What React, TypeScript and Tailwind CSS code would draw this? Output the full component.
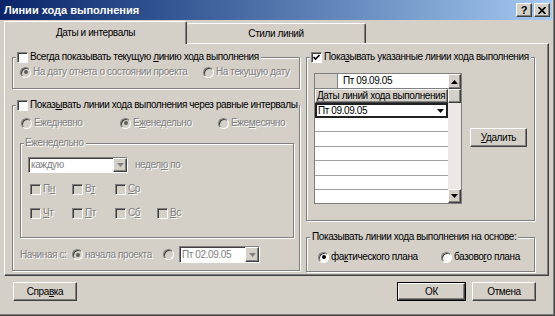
import React from "react";

const raised =
  "border border-t-white border-l-white border-r-[#404040] border-b-[#404040] shadow-[inset_-1px_-1px_0_#808080]";
const sunken =
  "border border-t-[#808080] border-l-[#808080] border-r-white border-b-white shadow-[inset_1px_1px_0_#404040]";
const dis = "text-[#808080] [text-shadow:1px_1px_0_#fff]";

function Check({ checked, disabled }: { checked?: boolean; disabled?: boolean }) {
  return (
    <span
      className={`relative flex h-[11px] w-[11px] shrink-0 items-center justify-center ${sunken} ${
        disabled ? "bg-[#d4d0c8]" : "bg-white"
      }`}
    >
      {checked && (
        <svg width="7" height="7" viewBox="0 0 7 7">
          <path d="M0.5 3 L2.5 5 L6.5 1" fill="none" stroke="#000" strokeWidth="1.6" />
        </svg>
      )}
    </span>
  );
}

function Radio({ checked, disabled }: { checked?: boolean; disabled?: boolean }) {
  return (
    <span
      className={`flex h-[11px] w-[11px] shrink-0 items-center justify-center rounded-full border border-t-[#808080] border-l-[#808080] border-r-white border-b-white shadow-[inset_1px_1px_0_#404040] ${
        disabled ? "bg-[#d4d0c8]" : "bg-white"
      }`}
    >
      {checked && (
        <span className={`h-[4px] w-[4px] rounded-full ${disabled ? "bg-[#606060]" : "bg-black"}`} />
      )}
    </span>
  );
}

function Arrow({ up, gray }: { up?: boolean; gray?: boolean }) {
  return (
    <svg width="7" height="4" viewBox="0 0 7 4">
      <polygon points={up ? "0,4 7,4 3.5,0" : "0,0 7,0 3.5,4"} fill={gray ? "#808080" : "#000"} />
    </svg>
  );
}

function Group({
  legend,
  className,
  children,
}: {
  legend: React.ReactNode;
  className: string;
  children?: React.ReactNode;
}) {
  return (
    <div className={`relative border border-[#808080] shadow-[inset_1px_1px_0_#fff,1px_1px_0_#fff] ${className}`}>
      <div className="absolute -top-[7px] left-[3px] flex h-[12px] items-center gap-[2px] whitespace-nowrap bg-[#d4d0c8] pl-[1px] pr-[2px]">
        {legend}
      </div>
      {children}
    </div>
  );
}

function RadioItem({
  label,
  checked,
  disabled,
  className,
}: {
  label: React.ReactNode;
  checked?: boolean;
  disabled?: boolean;
  className?: string;
}) {
  return (
    <div className={`flex h-[12px] items-center gap-[2px] whitespace-nowrap ${className ?? ""}`}>
      <Radio checked={checked} disabled={disabled} />
      <span className={disabled ? dis : ""}>{label}</span>
    </div>
  );
}

function Day({ label, className }: { label: React.ReactNode; className: string }) {
  return (
    <div className={`flex h-[12px] items-center gap-[2px] ${className}`}>
      <Check disabled />
      <span className={dis}>{label}</span>
    </div>
  );
}

export default function App() {
  return (
    <div className="h-[316px] w-[555px] overflow-hidden border-r border-b border-[#404040] bg-[#d4d0c8] font-['Liberation_Sans',Arial,sans-serif] text-[10px] leading-none tracking-[-0.4px] text-black">
      <div className="flex h-full flex-col border-r border-b border-[#808080] pr-px">
        {/* title bar */}
        <div className="flex h-[20px] shrink-0 items-center bg-gradient-to-r from-[#0a246a] to-[#a6caf0] pl-[4px] pr-[2px]">
          <span className="flex-1 text-[11px] font-bold tracking-normal text-white">Линии хода выполнения</span>
          <div className={`flex h-[14px] w-[16px] items-center justify-center bg-[#d4d0c8] ${raised}`}>
            <span className="text-[11px] font-bold tracking-normal">?</span>
          </div>
          <div className={`ml-[2px] flex h-[14px] w-[16px] items-center justify-center bg-[#d4d0c8] ${raised}`}>
            <svg width="8" height="7" viewBox="0 0 8 7">
              <path d="M0.5 0 L7.5 7 M7.5 0 L0.5 7" stroke="#000" strokeWidth="1.7" />
            </svg>
          </div>
        </div>

        {/* tabs */}
        <div className="flex h-[23px] shrink-0 items-end pl-[4px]">
          <div className="relative z-10 -mb-px flex h-[23px] w-[183px] items-center justify-center rounded-t-[2px] border-l border-t border-r border-l-white border-t-white border-r-[#404040] bg-[#d4d0c8] pb-[1px] shadow-[inset_-1px_0_0_#808080]">
            Даты и интервалы
          </div>
          <div className="flex h-[20px] w-[179px] items-center justify-center rounded-t-[2px] border-t border-r border-t-white border-r-[#404040] shadow-[inset_-1px_0_0_#808080]">
            Стили линий
          </div>
        </div>

        {/* tab panel */}
        <div className="ml-[4px] flex h-[233px] w-[545px] shrink-0 gap-[6px] border border-t-white border-l-white border-r-[#404040] border-b-[#404040] pl-[7px] pt-[13px] shadow-[inset_-1px_-1px_0_#808080]">
          {/* left column */}
          <div className="flex w-[288px] flex-col">
            <Group
              className="h-[32px] w-[288px]"
              legend={
                <>
                  <Check />
                  <span>
                    Всегда показывать текущую <u>л</u>инию хода выполнения
                  </span>
                </>
              }
            >
              <div className="flex pl-[7px] pt-[8px]">
                <RadioItem className="w-[183px]" checked disabled label="На дату отчета о состоянии проекта" />
                <RadioItem disabled label="На текущую дату" />
              </div>
            </Group>

            <Group
              className="mt-[16px] h-[166px] w-[288px]"
              legend={
                <>
                  <Check />
                  <span>
                    Показ<u>ы</u>вать линии хода выполнения через равные интервалы
                  </span>
                </>
              }
            >
              <div className="flex pl-[8px] pt-[11px]">
                <RadioItem
                  className="w-[99px]"
                  disabled
                  label={
                    <>
                      Еже<u>д</u>невно
                    </>
                  }
                />
                <RadioItem
                  className="w-[98px]"
                  checked
                  disabled
                  label={
                    <>
                      Е<u>ж</u>енедельно
                    </>
                  }
                />
                <RadioItem
                  disabled
                  label={
                    <>
                      Еже<u>м</u>есячно
                    </>
                  }
                />
              </div>

              <Group
                className="ml-[7px] mt-[14px] h-[95px] w-[274px]"
                legend={<span className={dis}>Еженедельно</span>}
              >
                <div className="ml-[7px] mt-[13px] flex items-center">
                  <div className={`flex h-[16px] w-[100px] bg-white ${sunken}`}>
                    <span className={`flex flex-1 items-center pl-[2px] ${dis}`}>каждую</span>
                    <span className={`flex w-[14px] items-center justify-center bg-[#d4d0c8] ${raised}`}>
                      <Arrow gray />
                    </span>
                  </div>
                  <span className={`ml-[7px] ${dis}`}>
                    недел<u>ю</u> по
                  </span>
                </div>
                <div className="ml-[9px] mt-[10px] flex">
                  <Day className="w-[42px]" label={<>П<u>н</u></>} />
                  <Day className="w-[43px]" label={<>В<u>т</u></>} />
                  <Day className="w-[42px]" label={<><u>С</u>р</>} />
                </div>
                <div className="ml-[9px] mt-[12px] flex">
                  <Day className="w-[42px]" label={<><u>Ч</u>т</>} />
                  <Day className="w-[43px]" label={<><u>П</u>т</>} />
                  <Day className="w-[42px]" label={<>С<u>б</u></>} />
                  <Day className="w-[42px]" label={<><u>В</u>с</>} />
                </div>
              </Group>

              <div className="ml-[7px] mt-[8px] flex h-[17px] items-center whitespace-nowrap">
                <span className={`w-[52px] ${dis}`}>Начиная с:</span>
                <RadioItem className="w-[91px]" checked disabled label="начала проекта" />
                <div className="w-[16px]">
                  <Radio disabled />
                </div>
                <div className={`flex h-[17px] w-[81px] bg-white ${sunken}`}>
                  <span className={`flex flex-1 items-center pl-[2px] ${dis}`}>Пт 02.09.05</span>
                  <span className={`flex w-[14px] items-center justify-center bg-[#d4d0c8] ${raised}`}>
                    <Arrow gray />
                  </span>
                </div>
              </div>
            </Group>
          </div>

          {/* right column */}
          <div className="flex w-[229px] flex-col">
            <Group
              className="h-[164px] w-[229px]"
              legend={
                <>
                  <Check checked />
                  <span>
                    Пока<u>з</u>ывать указанные линии хода выполнения
                  </span>
                </>
              }
            >
              <div className="flex items-start">
                <div className="ml-[7px] mt-[15px] flex h-[131px] w-[148px] border border-[#808080] bg-white">
                  <div className="flex w-[133px] flex-col whitespace-nowrap">
                    <div className="flex h-[15px]">
                      <div className="w-[23px] border-r border-b border-[#808080] bg-[#d4d0c8]" />
                      <div className="flex flex-1 items-center border-b border-[#808080] pl-[5px]">Пт 09.09.05</div>
                    </div>
                    <div className={`flex h-[14px] items-center bg-[#d4d0c8] pl-[1px] ${raised}`}>
                      Даты линий хода выполнения
                    </div>
                    <div className="flex h-[15px] items-center border-2 border-[#202020] pl-[1px]">
                      <span className="flex-1">Пт 09.09.05</span>
                      <span className="mr-[2px] flex w-[8px] justify-center">
                        <Arrow />
                      </span>
                    </div>
                    <div className="h-[14px] border-b border-[#a0a0a0]" />
                    <div className="h-[15px] border-b border-[#a0a0a0]" />
                    <div className="h-[14px] border-b border-[#a0a0a0]" />
                    <div className="h-[15px] border-b border-[#a0a0a0]" />
                    <div className="h-[14px] border-b border-[#a0a0a0]" />
                    <div className="flex-1" />
                  </div>
                  <div className="flex w-[13px] flex-col bg-[#ebe9e5]">
                    <div className={`flex h-[15px] items-center justify-center bg-[#d4d0c8] ${raised}`}>
                      <Arrow up />
                    </div>
                    <div className={`h-[14px] bg-[#d4d0c8] ${raised}`} />
                    <div className="flex-1" />
                    <div className={`flex h-[14px] items-center justify-center bg-[#d4d0c8] ${raised}`}>
                      <Arrow />
                    </div>
                  </div>
                </div>
                <div className={`ml-[8px] mt-[70px] flex h-[19px] w-[57px] items-center justify-center ${raised}`}>
                  <span>
                    <u>У</u>далить
                  </span>
                </div>
              </div>
            </Group>

            <Group
              className="mt-[16px] h-[35px] w-[229px]"
              legend={<span className="pl-[1px]">Показывать линии хода выполнения на основе:</span>}
            >
              <div className="flex pl-[11px] pt-[13px]">
                <RadioItem
                  className="w-[123px]"
                  checked
                  label={
                    <>
                      фа<u>к</u>тического плана
                    </>
                  }
                />
                <RadioItem
                  label={
                    <>
                      базово<u>г</u>о плана
                    </>
                  }
                />
              </div>
            </Group>
          </div>
        </div>

        {/* bottom buttons */}
        <div className="mt-[6px] flex h-[19px] shrink-0">
          <div className={`ml-[13px] flex h-[19px] w-[64px] items-center justify-center ${raised}`}>
            <span>
              Спра<u>в</u>ка
            </span>
          </div>
          <div className="ml-[320px] h-[19px] w-[69px] border border-black">
            <div className={`flex h-full w-full items-center justify-center ${raised}`}>ОК</div>
          </div>
          <div className={`ml-[6px] flex h-[19px] w-[64px] items-center justify-center ${raised}`}>Отмена</div>
        </div>
      </div>
    </div>
  );
}
